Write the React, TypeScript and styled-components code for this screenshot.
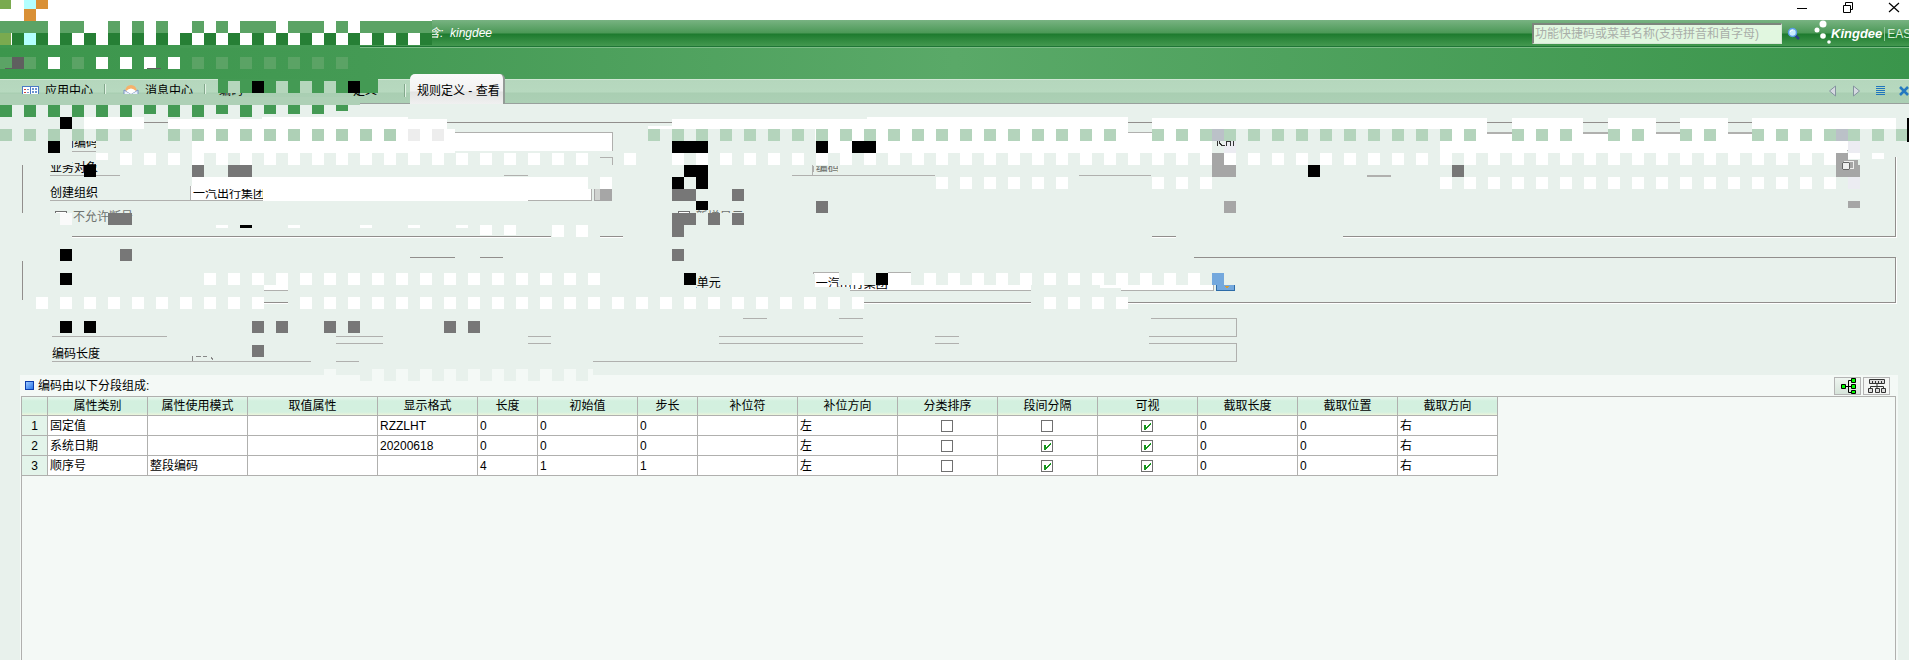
import React from 'react';
import styled, { createGlobalStyle, css } from 'styled-components';

const BG = '#e8f1ec';
const PANE = '#f4f9f6';

const GlobalStyle = createGlobalStyle`
  * { box-sizing: border-box; }
  body {
    margin: 0;
    background: ${BG};
    color: #000;
    font: 12px/16px "Liberation Sans", "Noto Sans CJK SC", sans-serif;
  }
  button, input { font: inherit; color: inherit; }
`;

const Page = styled.div`
  position: relative;
  display: flex;
  flex-direction: column;
  min-height: 100vh;
  overflow: hidden;
`;

const TitleBar = styled.div`
  display: flex;
  justify-content: flex-end;
  gap: 24px;
  height: 20px;
  padding-right: 4px;
  background: #fff;
`;

const PlainButton = styled.button`
  display: flex;
  align-items: center;
  justify-content: center;
  padding: 0;
  border: 0;
  background: none;
`;

const WindowButton = styled(PlainButton)`
  width: 22px;
  height: 14px;
`;

const Header = styled.header`
  display: flex;
  align-items: center;
  height: 28px;
  padding-left: 428px;
  white-space: nowrap;
  color: #fff;
  border-bottom: 1px solid #7cbc86;
  background: linear-gradient(#78b382 0, #4b9856 13px, #1d7a2e 14px, #43984f 26px, #1f7536 26px);
`;

const Company = styled.span`
  flex: 1;
  padding-bottom: 2px;
  font-style: italic;
`;

const Search = styled.input`
  width: 250px;
  height: 21px;
  padding: 0 0 0 1px;
  border: 1px solid #d6e6d6;
  border-top: 2px solid #7d857d;
  border-left: 2px solid #7d857d;
  outline: 0;
  background: #e1f7e0;
  &::placeholder { color: #a9aea9; opacity: 1; }
`;

const SearchButton = styled(PlainButton)`
  width: 24px;
  height: 20px;
`;

const Brand = styled.div`
  display: flex;
  align-items: center;
  width: 103px;
  height: 27px;
  padding-left: 7px;
  overflow: hidden;
  svg { flex: none; }
`;

const BrandName = styled.span`
  padding-right: 2px;
  border-right: 1px solid #93c69b;
  font: italic 700 13px/14px "Liberation Sans", sans-serif;
`;

const Product = styled.span`
  padding-left: 2px;
  font-size: 12px;
  color: #d9eedb;
`;

const Toolbar = styled.div`
  height: 31px;
  background: linear-gradient(90deg, #3c964c, #449a54 19%, #5aa968 50%, #3a954b);
`;

const TabBar = styled.nav`
  display: flex;
  align-items: flex-end;
  height: 25px;
  border-top: 1px solid #cfe6d3;
  border-bottom: 1px solid #98a09c;
  background: linear-gradient(#b5d7bd 0, #b7d9bf 12px, #a9ceb2 13px, #acd0b5 100%);
`;

const Tab = styled.button<{ $active?: boolean; $width: number; $indent: number }>`
  display: flex;
  flex: none;
  align-items: center;
  gap: 6px;
  width: ${p => p.$width}px;
  height: 24px;
  padding: 0 0 0 ${p => p.$indent}px;
  border: 0;
  background: none;
  white-space: nowrap;
  ${p => p.$active && css`
    height: 30px;
    margin: 0 0 -1px 4px;
    padding-top: 3px;
    border-right: 2px solid #939b96;
    border-radius: 5px 5px 0 0;
    background: linear-gradient(#fafafa 0, #f2f2f2 17px, #e3e4e3 18px, #f0f0f0 30px);
  `}
`;

const Separator = styled.span`
  flex: none;
  width: 2px;
  height: 13px;
  margin-bottom: 6px;
  border-left: 1px solid #82a78b;
  background: #e2f2e5;
`;

const TabTools = styled.div`
  display: flex;
  gap: 4px;
  height: 24px;
  margin: 0 -5px 0 auto;
`;

const TabTool = styled(PlainButton)`
  width: 20px;
  height: 24px;
`;

const Form = styled.form`
  padding: 18px 13px 0 22px;
`;

const Group = styled.fieldset<{ $top: number; $bottom: number }>`
  display: grid;
  grid-template-columns: repeat(3, minmax(0, 1fr));
  gap: 6px 60px;
  margin: 0 0 20px;
  min-width: 0;
  padding: ${p => p.$top}px 37px ${p => p.$bottom}px 27px;
  border: 1px solid #918e8c;
  box-shadow: 1px 1px #fff;
`;

const Field = styled.label`
  display: flex;
  height: 19px;
`;

const Caption = styled.span`
  flex: none;
  width: 140px;
  padding-top: 3px;
  border-bottom: 1px solid #b0b0ae;
`;

const TextBox = styled.input<{ $filled?: boolean }>`
  flex: 1;
  min-width: 0;
  height: 19px;
  padding: 2px 0 0 2px;
  border: 1px solid #b0b0ae;
  outline: 0;
  background: ${p => (p.$filled ? '#fff' : 'transparent')};
  color: ${p => (p.$filled ? '#000' : '#6f736f')};
`;

const Picker = styled.button<{ $blue?: boolean }>`
  width: 19px;
  height: 19px;
  margin-left: 2px;
  padding: 0;
  border: 1px solid ${p => (p.$blue ? '#2d6ca8' : '#a6a6a6')};
  background: ${p => (p.$blue ? '#74a8dd' : '#d0d3d0')};
`;

const CheckField = styled.label`
  display: flex;
  align-items: center;
  gap: 6px;
  height: 19px;
  padding-left: 5px;
  color: #6f736f;
`;

const Box = styled.input`
  appearance: none;
  width: 12px;
  height: 12px;
  margin: 0;
  border: 1px solid #707070;
  background: #fff;
  &:checked {
    background: #fff url("data:image/svg+xml,%3Csvg xmlns='http://www.w3.org/2000/svg' width='10' height='10'%3E%3Cpath d='M2 4h2v2h1V5h1V4h1V3h1V2h1v2H8v1H7v1H6v1H5v1H4v1H2z' fill='%2318961f'/%3E%3C/svg%3E") 0 0 no-repeat;
  }
`;

const Totals = styled.div`
  display: flex;
  flex-direction: column;
  gap: 6px;
  width: calc(65% - 3px);
  margin-top: -5px;
  padding-left: 30px;
`;

const Pane = styled.section`
  display: flex;
  flex: 1;
  flex-direction: column;
  margin: 13px 11px 0 20px;
  background: ${PANE};
`;

const PaneHeader = styled.div`
  display: flex;
  align-items: center;
  gap: 2px;
  height: 21px;
  padding: 0 8px 0 5px;
`;

const Bullet = styled.span`
  width: 9px;
  height: 9px;
  border: 1px solid #0b3cab;
  background: linear-gradient(135deg, #9cc8ff, #2a77ea);
`;

const PaneTitle = styled.h2`
  flex: 1;
  margin: 0;
  padding-left: 2px;
  font: inherit;
`;

const IconButton = styled(PlainButton)<{ $on?: boolean }>`
  width: 27px;
  height: 18px;
  border: 1px solid #b4b4b4;
  background: ${p => (p.$on ? 'linear-gradient(#eef5f0, #d6e4da)' : '#f4f6f4')};
`;

const Sheet = styled.div`
  flex: 1;
  margin: 0 2px 0 1px;
  border: 1px solid #b0b0ae;
  border-bottom: 0;
  overflow: hidden;
`;

const Grid = styled.table`
  width: 1476px;
  table-layout: fixed;
  border-collapse: separate;
  border-spacing: 0;
  th, td {
    height: 20px;
    padding: 0 3px 0 2px;
    border-right: 1px solid #b0b0ae;
    border-bottom: 1px solid #b0b0ae;
    background: #fff;
    font-weight: 400;
    line-height: 16px;
    text-align: left;
    white-space: nowrap;
  }
  thead th {
    height: 19px;
    padding: 0;
    text-align: center;
    background: linear-gradient(#e8f7ee 0, #d3f0df 4px, #d3f0df 15px, #edf5dc 18px);
  }
  tbody th { padding: 0; text-align: center; background: #e3f4ea; }
  td input { display: block; margin: 0 auto; }
`;

const Mosaic = styled.svg`
  position: absolute;
  top: 0;
  left: 0;
  width: 100%;
  height: 400px;
  pointer-events: none;
`;

const columns: [string, number][] = [
  ['属性类别', 100], ['属性使用模式', 100], ['取值属性', 130], ['显示格式', 100],
  ['长度', 60], ['初始值', 100], ['步长', 60], ['补位符', 100], ['补位方向', 100],
  ['分类排序', 100], ['段间分隔', 100], ['可视', 100], ['截取长度', 100],
  ['截取位置', 100], ['截取方向', 100],
];

const records: (string | boolean)[][] = [
  ['固定值', '', '', 'RZZLHT', '0', '0', '0', '', '左', false, false, true, '0', '0', '右'],
  ['系统日期', '', '', '20200618', '0', '0', '0', '', '左', false, true, true, '0', '0', '右'],
  ['顺序号', '整段编码', '', '', '4', '1', '1', '', '左', false, true, true, '0', '0', '右'],
];

type Rect = [x: number, y: number, w: number, h: number];

/* Numbers from a to b, every other one. */
const every2 = (a: number, b: number) =>
  Array.from({ length: Math.floor((b - a) / 2) + 1 }, (_, i) => a + i * 2);

/* Tiles lie on a 12px lattice whose first row starts 3px above the page. */
const tiles = (row: number, cols: number[], h = 12): Rect[] =>
  cols.map(c => [c * 12, row * 12 - 3, 12, h]);

const layers: [string, Rect[]][] = [
  [BG, [
    [20, 121, 124, 3], [20, 124, 5, 41], [20, 213, 5, 26], [22, 235, 50, 4],
    [551, 235, 49, 4], [623, 235, 529, 4], [1176, 235, 167, 4], [1892, 121, 6, 36],
    [48, 129, 144, 12], [48, 141, 24, 24], [96, 141, 96, 12], [72, 150, 24, 10], [96, 153, 96, 12],
    [189, 153, 411, 24], [588, 177, 12, 12], [600, 158, 16, 28], [120, 165, 72, 20],
    [48, 176, 144, 10], [593, 180, 22, 9], [612, 186, 4, 17], [55, 213, 16, 14],
    [671, 129, 144, 12], [671, 141, 157, 24], [671, 165, 121, 44], [792, 165, 20, 12],
    [812, 153, 430, 12], [813, 158, 30, 8], [838, 158, 403, 20], [812, 172, 430, 28],
    [1151, 165, 90, 36], [671, 213, 80, 14],
    [1152, 129, 288, 46], [1290, 175, 77, 10], [1391, 154, 474, 50], [1290, 176, 160, 26],
    [1848, 129, 16, 30], [792, 178, 450, 24],
    [20, 256, 390, 5], [455, 256, 25, 4], [503, 256, 691, 4], [25, 261, 239, 36],
    [20, 300, 244, 8], [264, 268, 405, 21], [288, 285, 384, 12], [288, 300, 575, 6],
    [672, 268, 24, 24], [696, 289, 116, 4], [809, 274, 6, 16], [809, 287, 41, 6],
    [839, 270, 49, 15], [911, 270, 326, 15],
    [1031, 285, 90, 20], [1235, 268, 640, 26],
    [48, 315, 695, 20], [167, 334, 169, 6], [191, 340, 145, 8],
    [383, 334, 145, 12], [551, 334, 168, 12], [767, 315, 72, 6], [863, 315, 288, 19],
    [863, 334, 286, 13], [167, 340, 24, 5], [311, 358, 25, 6], [359, 358, 234, 6], [190, 346, 6, 10],
  ]],
  ['#b0b0ae', [
    [72, 151, 24, 1], [50, 175, 22, 1], [96, 175, 24, 1], [504, 175, 24, 1], [504, 182, 24, 1], [612, 157, 1, 8], [600, 157, 12, 1],
    [812, 165, 1, 10], [792, 175, 143, 1], [1079, 175, 72, 1], [1367, 176, 24, 1], [935, 336, 24, 1], [935, 343, 24, 1],
  ]],
  ['#fff', [
    [0, 9, 24, 12], [0, 20, 432, 25], [84, 117, 60, 12], [168, 119, 240, 10], [262, 117, 146, 12], [408, 119, 39, 10],
    [192, 129, 263, 24], [455, 134, 157, 17], [192, 177, 396, 12], [263, 189, 265, 12],
    [672, 119, 195, 10], [867, 117, 261, 12], [648, 126, 24, 3], [1152, 118, 335, 11],
    [1512, 118, 71, 11], [1608, 118, 48, 11], [1680, 118, 48, 11], [1752, 118, 144, 11],
    [815, 129, 313, 12], [1152, 129, 60, 12], [828, 141, 384, 12], [1128, 134, 24, 7],
    [1440, 129, 47, 12], [1512, 129, 71, 12], [1608, 129, 48, 12], [1680, 129, 48, 12], [1752, 129, 95, 12], [1440, 134, 407, 19],
    [888, 273, 23, 13], [1100, 285, 112, 3], [264, 285, 24, 5],
    ...tiles(13, [8], 7), ...tiles(13, every2(10, 48)), ...tiles(13, [52, ...every2(56, 152)]),
    ...tiles(13, [154, 156], 6), ...tiles(15, [50, ...every2(78, 88), 96, 98, 100, ...every2(120, 152)]),
    ...tiles(19, [18, 24, 30, 34, 38], 3), ...tiles(19, [40, 42], 10), ...tiles(19, [46, 48]),
    ...tiles(23, [...every2(17, 49), 71, ...every2(77, 99)]),
    ...tiles(25, [...every2(3, 21), ...every2(25, 71), 87, 89, 91, 93]),
  ]],
  ['#918e8c', [[1487, 122, 25, 1], [1583, 122, 25, 1], [1656, 122, 24, 1], [1728, 122, 24, 1], [1128, 122, 24, 1]]],
  ['#b0b0ae', [[1487, 133, 25, 1], [1583, 133, 25, 1], [1656, 133, 24, 1], [1728, 133, 24, 1]]],
  ['#5ba365', tiles(2, [0, 1, 2, 3, 5, 6, 9, 11, 13, 16, 18, 20, 21, 22, 24, 25, 26, 28, 30, 31, 32, 33, 34, 35])],
  ['#267f35', tiles(3, [1, ...every2(3, 35)])],
  ['#7aaa4f', [[0, 0, 11, 9], [0, 33, 11, 12]]],
  ['#b3ffff', [[24, 0, 12, 9], [24, 33, 12, 12]]],
  ['#d99036', [[36, 0, 12, 9], [24, 9, 12, 12]]],
  ['#3f984f', [[0, 45, 180, 3]]],
  ['#449a54', [[180, 45, 180, 3], [218, 79, 160, 14], ...tiles(9, every2(0, 10)), ...tiles(9, [14, 16, 20]), ...tiles(9, [12, 18, 22, 24, 26], 9), ...tiles(9, [28], 6)]],
  ['#5ba365', tiles(5, [0, 2, 6, ...every2(16, 28)])],
  ['#fff', tiles(5, [4, 8, 10, 12, 14])],
  ['#5f5f5f', [[12, 57, 12, 12], [5, 68, 14, 1], [147, 68, 14, 1]]],
  ['#b5d6bc', tiles(7, [19, 23, 25, 27])],
  ['#aed0b6', [
    [0, 94, 218, 11], [218, 97, 142, 8],
    ...tiles(11, [...every2(0, 10), ...every2(14, 32)]),
  ]],
  ['#b4d4bc', tiles(11, [...every2(54, 92), 96, 98, 100, 102, 104, ...every2(106, 122), 126, 128, 130, 134, 136, 140, 142, 146, 148, 150, 152, 154, 156, 158])],
  ['#ededed', tiles(11, [34, 36])],
  ['#bbc1c8', tiles(11, [101, 153])],
  ['#ececf2', [...tiles(12, [102, 154]), ...tiles(15, [154])]],
  ['#777', [
    ...tiles(14, [16, 19, 20, 121]), ...tiles(16, [56, 57, 61]), ...tiles(17, [68]),
    ...tiles(18, [9, 10, 56, 57, 59, 61]), ...tiles(19, [56]), ...tiles(21, [10, 56]),
    ...tiles(27, [21, 23, 27, 29, 37, 39]), ...tiles(29, [21]),
  ]],
  ['#a6a6a6', [...tiles(13, [101, 153]), ...tiles(14, [101, 102, 153, 154]), ...tiles(16, [50]), ...tiles(17, [102]), ...tiles(17, [154], 7), [1848, 160, 10, 5]]],
  ['#fafafa', tiles(18, [5])],
  ['#74a8dd', tiles(23, [101])],
  ['#000', [
    ...tiles(7, [21, 29]), ...tiles(10, [5]), ...tiles(12, [4, 56, 57, 58, 68, 71, 72]),
    ...tiles(14, [7, 57, 58, 109]), ...tiles(15, [56, 58]), ...tiles(17, [58], 9),
    ...tiles(19, [20], 3), ...tiles(21, [5]), ...tiles(23, [5, 57, 73]), ...tiles(27, [5, 7]),
    [1907, 118, 2, 24],
  ]],
  [PANE, [[324, 369, 12, 6], [371, 369, 222, 6]]],
  [BG, tiles(31, every2(30, 48))],
];

function Defects() {
  return (
    <Mosaic aria-hidden="true" shapeRendering="crispEdges">
      {layers.map(([fill, rects], i) => (
        <g key={i} fill={fill}>
          {rects.map(([x, y, width, height], j) => (
            <rect key={j} x={x} y={y} width={width} height={height} />
          ))}
        </g>
      ))}
      <path d="M1217.500 141v5M1219.500 141v2l2 2h3M1226.500 146v-5h4v5M1233.500 141v5" fill="none" stroke="#333" />
      <path d="M192.500 361v-5M196 356.500h5m2 0h4M211 357l2 3" fill="none" stroke="#888" />
      <circle cx="1846" cy="166" r="4" fill="#eee" stroke="#666" />
      <path d="M1844 161h9v7h-3" fill="none" stroke="#eee" />
      <path d="M1224 286h5l-2 3z" fill="#d79b34" />
    </Mosaic>
  );
}

const NavIcon = () => (
  <svg width="17" height="12" viewBox="0 0 17 12">
    <path d="M0 1h17v10H0z" fill="#4a7ac4" />
    <path d="M1 2h7v8H1zM9 2h7v8H9z" fill="#fff" />
    <path d="M2 4h2v1H2zM2 7h2v1H2z" fill="#d2423c" />
    <path d="M5 4h2v1H5zM5 7h2v1H5zM10 3h2v2h-2zM13 3h2v2h-2zM10 6h2v2h-2zM13 6h2v2h-2z" fill="#6d93d0" />
  </svg>
);

const MailIcon = () => (
  <svg width="16" height="13" viewBox="0 0 16 13">
    <path d="M2 6q1-6 6-6t6 6z" fill="#f5b26b" />
    <path d="M1 5l7 4 7-4v7H1z" fill="#e8effa" stroke="#7893c4" />
    <path d="M3 6q5-5 10 0L8 9z" fill="#fff" />
  </svg>
);

export default function App() {
  return (
    <>
      <GlobalStyle />
      <Page>
        <TitleBar>
          <WindowButton aria-label="最小化"><svg width="12" height="12"><path d="M1 7.500h10" stroke="#000" /></svg></WindowButton>
          <WindowButton aria-label="还原"><svg width="12" height="12"><path d="M1.500 4.500h7v7h-7zM3.500 4V1.500h7v7H9" fill="none" stroke="#000" /></svg></WindowButton>
          <WindowButton aria-label="关闭"><svg width="12" height="12"><path d="M1 2l10 9M11 2L1 11" stroke="#000" strokeWidth="1.200" /></svg></WindowButton>
        </TitleBar>
        <Header>
          <Company>含:&nbsp; kingdee</Company>
          <Search type="search" aria-label="搜索" placeholder="功能快捷码或菜单名称(支持拼音和首字母)" />
          <SearchButton aria-label="查找">
            <svg width="14" height="14" viewBox="0 0 14 14">
              <path d="M8 8l4 4" stroke="#2b3f86" strokeWidth="2.500" />
              <circle cx="5.500" cy="5.500" r="4" fill="#c8ecff" stroke="#5a9ce6" strokeWidth="1.500" />
              <path d="M3 5q1-2 3-2" fill="none" stroke="#fff" />
            </svg>
          </SearchButton>
          <Brand>
            <svg width="18" height="27" viewBox="0 0 18 27" fill="#fff">
              <circle cx="10" cy="4" r="3.500" /><circle cx="4" cy="10" r="2.500" />
              <circle cx="10" cy="16" r="2.800" /><circle cx="16" cy="22" r="1.800" />
            </svg>
            <BrandName>Kingdee</BrandName>
            <Product>EAS</Product>
          </Brand>
        </Header>
        <Toolbar />
        <TabBar>
          <Tab $width={104} $indent={22}><NavIcon />应用中心</Tab>
          <Separator />
          <Tab $width={98} $indent={17}><MailIcon />消息中心</Tab>
          <Separator />
          <Tab $width={147} $indent={13}>编码</Tab>
          <Tab $width={51} $indent={0}>定义</Tab>
          <Separator />
          <Tab $active $width={95} $indent={7}>规则定义 - 查看</Tab>
          <TabTools>
            <TabTool aria-label="上一个"><svg width="9" height="12"><path d="M7.500 1v10L1.500 6z" fill="#d5d9e0" stroke="#84939f" /></svg></TabTool>
            <TabTool aria-label="下一个"><svg width="9" height="12"><path d="M1.500 1v10l6-5z" fill="#d5d9e0" stroke="#84939f" /></svg></TabTool>
            <TabTool aria-label="列表"><svg width="9" height="10"><path d="M0 .5h9M0 2.500h9M0 4.500h9M0 6.500h9M0 8.500h9" stroke="#2176bd" /></svg></TabTool>
            <TabTool aria-label="关闭标签"><svg width="10" height="10"><path d="M1 1l8 8M9 1L1 9" stroke="#2479c0" strokeWidth="2.500" /></svg></TabTool>
          </TabTools>
        </TabBar>
        <Form onSubmit={e => e.preventDefault()}>
          <Group $top={9} $bottom={10}>
            <Field><Caption>规则编码</Caption><TextBox $filled /></Field>
            <Field><Caption /><TextBox $filled aria-label="名称" /></Field>
            <Field><Caption /><TextBox $filled aria-label="描述" /></Field>
            <Field><Caption>业务对象</Caption><TextBox /></Field>
            <Field><Caption /><TextBox aria-label="属性" defaultValue="编码" /></Field>
            <Field><Caption /><TextBox aria-label="取值" /></Field>
            <Field><Caption>创建组织</Caption><TextBox $filled defaultValue="一汽出行集团" /><Picker type="button" aria-label="选择组织" /></Field>
            <span /><span />
            <CheckField><Box type="checkbox" disabled />不允许断号</CheckField>
            <CheckField><Box type="checkbox" disabled />新增显示</CheckField>
          </Group>
          <Group $top={14} $bottom={11}>
            <Field><Caption /><TextBox aria-label="组织类型" /></Field>
            <Field><Caption>管理单元</Caption><TextBox $filled defaultValue="一汽出行集团" /><Picker type="button" $blue aria-label="选择单元" /></Field>
          </Group>
          <Totals>
            <Field><Caption /><TextBox aria-label="编码示例" /></Field>
            <Field><Caption>编码长度</Caption><TextBox /></Field>
          </Totals>
        </Form>
        <Pane>
          <PaneHeader>
            <Bullet />
            <PaneTitle>编码由以下分段组成:</PaneTitle>
            <IconButton $on aria-label="树形">
              <svg width="16" height="16" viewBox="0 0 16 16">
                <path d="M5 8.500h6M8.500 14.500v-12H11M8.500 14.500H11" fill="none" stroke="#000" />
                <path d="M1.500 6.500h4v4h-4zM11.500.5h4v4h-4zM11.500 6.500h4v4h-4zM11.500 12.500h4v3h-4z" fill="#0f0" stroke="#000" />
              </svg>
            </IconButton>
            <IconButton aria-label="结构">
              <svg width="18" height="16" viewBox="0 0 18 16">
                <path d="M1.500 1.500h15v4h-15zM.5 10.500h4v4h-4zM7.500 10.500h4v4h-4zM13.500 10.500h4v4h-4z" fill="#ddd" stroke="#333" />
                <path d="M4.500 3v3M7.500 3v3M10.500 3v3M13.500 3v3M9 6v4M2.500 10V8.500h13V10" fill="none" stroke="#333" />
              </svg>
            </IconButton>
          </PaneHeader>
          <Sheet>
            <Grid>
              <colgroup>
                <col width={26} />
                {columns.map(([name, width]) => <col key={name} width={width} />)}
              </colgroup>
              <thead>
                <tr><th />{columns.map(([name]) => <th key={name} scope="col">{name}</th>)}</tr>
              </thead>
              <tbody>
                {records.map((record, r) => (
                  <tr key={r}>
                    <th scope="row">{r + 1}</th>
                    {record.map((value, c) => (
                      <td key={c}>
                        {typeof value === 'boolean'
                          ? <Box type="checkbox" defaultChecked={value} aria-label={columns[c][0]} />
                          : value}
                      </td>
                    ))}
                  </tr>
                ))}
              </tbody>
            </Grid>
          </Sheet>
        </Pane>
        <Defects />
      </Page>
    </>
  );
}
